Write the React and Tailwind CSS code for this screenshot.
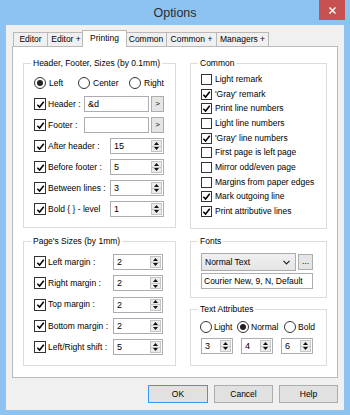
export default function OptionsDialog() {
  const Check = ({ on, size = 'w-[12px] h-[12px]' }) => (
    <span className={`${size} shrink-0 border border-[#333] bg-white flex items-center justify-center`}>
      {on && (
        <svg viewBox="0 0 10 10" className="w-[9px] h-[9px]">
          <path d="M1.5 5.2 L4 7.8 L8.6 2" fill="none" stroke="#000" strokeWidth="1.7" />
        </svg>
      )}
    </span>
  );

  const Radio = ({ on }) => (
    <span className="w-[12px] h-[12px] shrink-0 rounded-full border border-[#333] bg-white flex items-center justify-center">
      {on && <span className="w-[6px] h-[6px] rounded-full bg-[#222]" />}
    </span>
  );

  const Spin = ({ value, w }) => (
    <div className={`${w} h-[16px] flex border border-[#abadb3] bg-white`}>
      <span className="flex-1 pl-[3px] leading-[14px] text-[9px]">{value}</span>
      <span className="w-[11px] my-[1px] mr-[1px] flex flex-col border border-[#c4c4c4] bg-[#ececec]">
        <span className="flex-1 flex items-center justify-center border-b border-[#c4c4c4]">
          <svg viewBox="0 0 5 3" className="w-[5px] h-[3px]"><path d="M0 3 L2.5 0 L5 3 Z" fill="#111" /></svg>
        </span>
        <span className="flex-1 flex items-center justify-center">
          <svg viewBox="0 0 5 3" className="w-[5px] h-[3px]"><path d="M0 0 L2.5 3 L5 0 Z" fill="#111" /></svg>
        </span>
      </span>
    </div>
  );

  const tabs = [
    { name: 'Editor', w: 'w-[34px]' },
    { name: 'Editor +', w: 'w-[37px]' },
    { name: 'Printing', w: 'w-[45px]', active: true },
    { name: 'Common', w: 'w-[41px]' },
    { name: 'Common +', w: 'w-[50px]' },
    { name: 'Managers +', w: 'w-[53px]', last: true },
  ];

  const sizeRows = [
    { label: 'After header :', value: '15' },
    { label: 'Before footer :', value: '5' },
    { label: 'Between lines :', value: '3' },
    { label: 'Bold { } - level', value: '1' },
  ];

  const pageRows = [
    { label: 'Left margin :', value: '2' },
    { label: 'Right margin :', value: '2' },
    { label: 'Top margin :', value: '2' },
    { label: 'Bottom margin :', value: '2' },
    { label: 'Left/Right shift :', value: '5' },
  ];

  const common = [
    ['Light remark', false],
    ["'Gray' remark", true],
    ['Print line numbers', true],
    ['Light line numbers', false],
    ["'Gray' line numbers", true],
    ['First page is left page', false],
    ['Mirror odd/even page', false],
    ['Margins from paper edges', false],
    ['Mark outgoing line', true],
    ['Print attributive lines', true],
  ];

  return (
    <div className="w-[350px] h-[415px] bg-[#8dc3f1] px-[6px] pb-[5px] flex flex-col font-['Liberation_Sans',Arial,sans-serif] text-[8.5px] text-black">
      <div className="h-[25px] shrink-0 grid grid-cols-[1fr_auto_1fr] items-start">
        <div />
        <div className="text-[12.5px] leading-[16px] pt-[5px] text-[#2b2b2b]">Options</div>
        <div className="flex justify-end -mr-[1px]">
          <div className="w-[26px] h-[20px] bg-[#c75050] flex items-center justify-center">
            <svg viewBox="0 0 8 8" className="w-[7px] h-[7px]">
              <path d="M0.5 0.5 L7.5 7.5 M7.5 0.5 L0.5 7.5" stroke="#fff" strokeWidth="1.6" />
            </svg>
          </div>
        </div>
      </div>

      <div className="flex-1 bg-[#f0f0f0] px-[6px] pt-[5px] flex flex-col">
        {/* tabs */}
        <div className="h-[16px] flex items-end pl-[1px]">
          {tabs.map((t) =>
            t.active ? (
              <div key={t.name} className={`${t.w} h-[17px] -mx-[2px] -mb-px relative z-10 bg-white border border-b-0 border-[#b9b9b9] flex items-center justify-center pb-[1px]`}>
                {t.name}
              </div>
            ) : (
              <div key={t.name} className={`${t.w} h-[14px] bg-[#f0f0f0] border-t border-l border-[#b9b9b9] ${t.last ? 'border-r' : ''} flex items-center justify-center`}>
                {t.name}
              </div>
            )
          )}
        </div>

        {/* panel */}
        <div className="h-[332px] bg-white border border-[#b9b9b9] pt-[9px] pl-[10px] flex gap-[14px]">
          <div className="w-[153px] flex flex-col gap-[6px]">
            <fieldset className="h-[172px] border border-[#dcdcdc]">
              <legend className="ml-[7px] px-[2px] leading-[14px]">Header, Footer, Sizes (by 0.1mm)</legend>
              <div className="pt-[5px] pl-[10px] flex flex-col gap-[5px]">
                <div className="h-[16px] flex items-center">
                  <div className="w-[44px] flex items-center gap-[3px]"><Radio on />Left</div>
                  <div className="w-[51px] flex items-center gap-[3px]"><Radio />Center</div>
                  <div className="flex items-center gap-[3px]"><Radio />Right</div>
                </div>
                {[['Header :', '&d'], ['Footer :', '']].map(([l, v]) => (
                  <div key={l} className="h-[16px] flex items-center">
                    <div className="w-[50px] flex items-center gap-[2px]"><Check on />{l}</div>
                    <div className="w-[65px] h-[16px] border border-[#abadb3] bg-white pl-[3px] leading-[14px] text-[9px]">{v}</div>
                    <div className="ml-[2px] w-[13px] h-[16px] border border-[#acacac] bg-[#e5e5e5] flex items-center justify-center text-[8px]">&gt;</div>
                  </div>
                ))}
                {sizeRows.map((r) => (
                  <div key={r.label} className="h-[16px] flex items-center">
                    <div className="w-[76px] flex items-center gap-[2px]"><Check on />{r.label}</div>
                    <Spin value={r.value} w="w-[54px]" />
                  </div>
                ))}
              </div>
            </fieldset>

            <fieldset className="h-[132px] border border-[#dcdcdc]">
              <legend className="ml-[7px] px-[2px] leading-[14px]">Page's Sizes (by 1mm)</legend>
              <div className="pt-[6px] pl-[10px] flex flex-col gap-[5.3px]">
                {pageRows.map((r) => (
                  <div key={r.label} className="h-[16px] flex items-center">
                    <div className="w-[79px] flex items-center gap-[2px]"><Check on />{r.label}</div>
                    <Spin value={r.value} w="w-[50px]" />
                  </div>
                ))}
              </div>
            </fieldset>
          </div>

          <div className="w-[137px] flex flex-col">
            <fieldset className="h-[173px] border border-[#dcdcdc]">
              <legend className="ml-[7px] px-[2px] leading-[14px]">Common</legend>
              <div className="pt-[2px] pl-[10px] flex flex-col">
                {common.map(([l, on]) => (
                  <div key={l} className="h-[14.7px] flex items-center gap-[3px]">
                    <Check on={on} size="w-[11px] h-[11px]" />
                    {l}
                  </div>
                ))}
              </div>
            </fieldset>

            <fieldset className="mt-[5px] h-[64px] border border-[#dcdcdc]">
              <legend className="ml-[7px] px-[2px] leading-[14px]">Fonts</legend>
              <div className="pt-[5px] pl-[10px]">
                <div className="flex items-center">
                  <div className="w-[95px] h-[18px] border border-[#acacac] bg-gradient-to-b from-[#f0f0f0] to-[#e5e5e5] flex items-center pl-[3px] pr-[5px] justify-between">
                    <span>Normal Text</span>
                    <svg viewBox="0 0 7 5" className="w-[7px] h-[5px]"><path d="M0.5 0.8 L3.5 3.8 L6.5 0.8" fill="none" stroke="#222" strokeWidth="1.2" /></svg>
                  </div>
                  <div className="ml-[2px] w-[15px] h-[16px] border border-[#acacac] bg-[#e5e5e5] flex items-center justify-center leading-none pb-[2px]">...</div>
                </div>
                <div className="mt-[2px] w-[112px] h-[16px] border border-[#abadb3] bg-white pl-[2px] leading-[14px]">Courier New, 9, N, Default</div>
              </div>
            </fieldset>

            <fieldset className="mt-[4px] h-[64px] border border-[#dcdcdc]">
              <legend className="ml-[7px] px-[2px] leading-[14px]">Text Attributes</legend>
              <div className="pt-[4px] pl-[9px]">
                <div className="h-[14px] flex items-center">
                  <div className="w-[37px] flex items-center gap-[2px]"><Radio />Light</div>
                  <div className="w-[47px] flex items-center gap-[2px]"><Radio on />Normal</div>
                  <div className="flex items-center gap-[2px]"><Radio />Bold</div>
                </div>
                <div className="mt-[4px] flex gap-[8px] pl-[1px]">
                  <Spin value="3" w="w-[32px]" />
                  <Spin value="4" w="w-[32px]" />
                  <Spin value="6" w="w-[32px]" />
                </div>
              </div>
            </fieldset>
          </div>
        </div>

        {/* buttons */}
        <div className="mt-[7px] flex justify-end gap-[6px]">
          <div className="w-[60px] h-[18px] border border-[#3399ff] bg-[#e1e1e1] flex items-center justify-center">OK</div>
          <div className="w-[59px] h-[18px] border border-[#adadad] bg-[#e1e1e1] flex items-center justify-center">Cancel</div>
          <div className="w-[59px] h-[18px] border border-[#adadad] bg-[#e1e1e1] flex items-center justify-center">Help</div>
        </div>
      </div>
    </div>
  );
}
